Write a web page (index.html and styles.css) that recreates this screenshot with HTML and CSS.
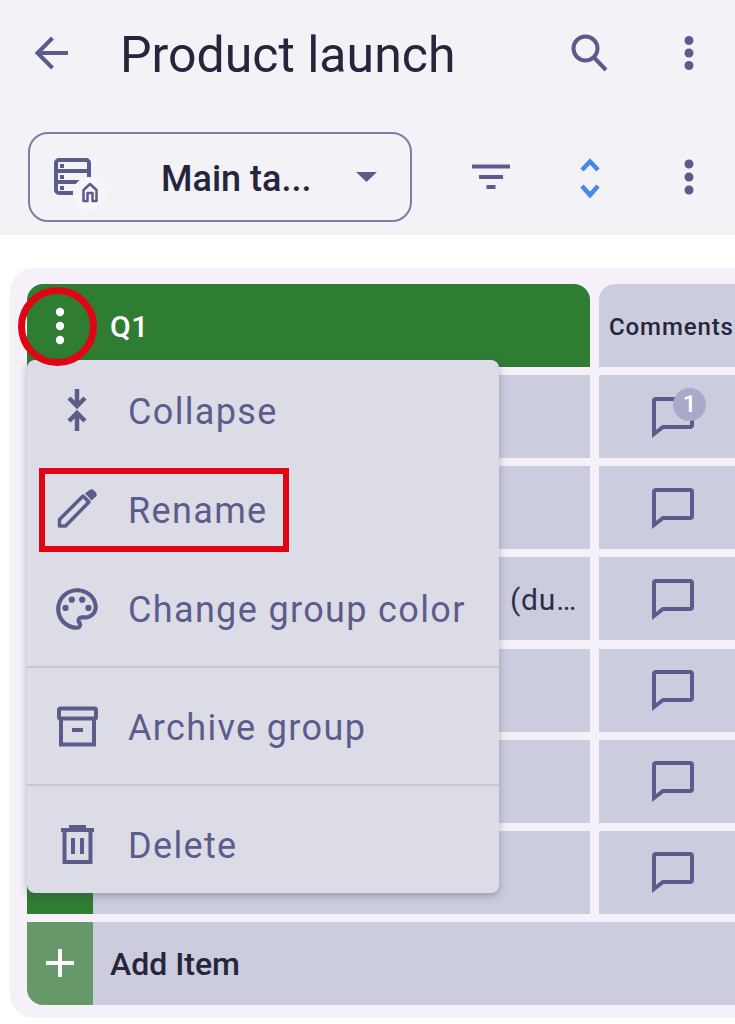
FILE: index.html
```html
<!DOCTYPE html>
<html lang="en">
<head>
<meta charset="utf-8">
<title>Product launch</title>
<link rel="stylesheet" href="styles.css">
</head>
<body>
<div class="app">
  <header class="topbar">
    <div class="title-row">
      <button class="icon-slot">
        <svg class="ico" viewBox="0 0 50 50"><path class="st" d="M41 25H11M25.500 10 10.500 25 25.500 40"/></svg>
      </button>
      <h1 class="title">Product launch</h1>
      <div class="actions">
        <button class="icon-slot">
          <svg class="ico" viewBox="0 0 50 50"><circle class="st" cx="21.500" cy="20.500" r="12"/><path class="st" d="M30 29.500 42 42"/></svg>
        </button>
        <button class="icon-slot">
          <svg class="ico" viewBox="0 0 50 50"><circle class="fl" cx="25" cy="12.500" r="4.500"/><circle class="fl" cx="25" cy="25" r="4.500"/><circle class="fl" cx="25" cy="37.500" r="4.500"/></svg>
        </button>
      </div>
    </div>
    <div class="tool-row">
      <div class="selector">
        <svg class="table-ico" viewBox="0 0 56 56">
          <rect class="st" x="4" y="11" width="33" height="33" rx="3"/>
          <path class="st" d="M4 22H37M4 33H37"/>
          <rect class="fl" x="8" y="15" width="4" height="4"/><rect class="fl" x="8" y="26" width="4" height="4"/><rect class="fl" x="8" y="37" width="4" height="4"/>
          <circle class="badge-bg" cx="37" cy="44" r="16"/>
          <path class="st-thin" d="M31.500 52V41L38 35 44.500 41V52H40.500V44H35.500V52Z"/>
        </svg>
        <span class="selector-label">Main ta...</span>
        <svg class="caret" viewBox="0 0 21 10"><path class="fl" d="M0 0H21L10.500 10Z"/></svg>
      </div>
      <div class="actions tools">
        <button class="icon-slot">
          <svg class="ico" viewBox="0 0 50 50"><path class="st" d="M6 14.500H44M13 25H37M20.500 35H29.500"/></svg>
        </button>
        <button class="icon-slot">
          <svg class="ico" viewBox="0 0 50 50"><path class="st-blue" d="M17 18 25 9.500 33 18M17 34 25 43 33 34"/></svg>
        </button>
        <button class="icon-slot">
          <svg class="ico" viewBox="0 0 50 50"><circle class="fl" cx="25" cy="12" r="4.500"/><circle class="fl" cx="25" cy="25" r="4.500"/><circle class="fl" cx="25" cy="38" r="4.500"/></svg>
        </button>
      </div>
    </div>
  </header>

  <main class="card">
    <div class="board">
      <div class="row">
        <div class="group-head"><svg class="head-dots" viewBox="0 0 12 40"><circle cx="6" cy="6" r="4.200"/><circle cx="6" cy="20" r="4.200"/><circle cx="6" cy="34" r="4.200"/></svg></div>
        <div class="group-head head-name">Q1</div>
        <div class="col-head">Comments</div>
      </div>
      <div class="row">
        <div class="stripe"></div><div class="name"></div>
        <div class="comment"><span class="bubble-wrap"><svg class="bubble" viewBox="0 0 42 42"><path class="st" d="M2 37V4Q2 2 4 2H38Q40 2 40 4V28Q40 30 38 30H11Z"/></svg><span class="count">1</span></span></div>
      </div>
      <div class="row">
        <div class="stripe"></div><div class="name"></div>
        <div class="comment"><span class="bubble-wrap"><svg class="bubble" viewBox="0 0 42 42"><path class="st" d="M2 37V4Q2 2 4 2H38Q40 2 40 4V28Q40 30 38 30H11Z"/></svg></span></div>
      </div>
      <div class="row">
        <div class="stripe"></div><div class="name name-text">(du…</div>
        <div class="comment"><span class="bubble-wrap"><svg class="bubble" viewBox="0 0 42 42"><path class="st" d="M2 37V4Q2 2 4 2H38Q40 2 40 4V28Q40 30 38 30H11Z"/></svg></span></div>
      </div>
      <div class="row">
        <div class="stripe"></div><div class="name"></div>
        <div class="comment"><span class="bubble-wrap"><svg class="bubble" viewBox="0 0 42 42"><path class="st" d="M2 37V4Q2 2 4 2H38Q40 2 40 4V28Q40 30 38 30H11Z"/></svg></span></div>
      </div>
      <div class="row">
        <div class="stripe"></div><div class="name"></div>
        <div class="comment"><span class="bubble-wrap"><svg class="bubble" viewBox="0 0 42 42"><path class="st" d="M2 37V4Q2 2 4 2H38Q40 2 40 4V28Q40 30 38 30H11Z"/></svg></span></div>
      </div>
      <div class="row">
        <div class="stripe"></div><div class="name"></div>
        <div class="comment"><span class="bubble-wrap"><svg class="bubble" viewBox="0 0 42 42"><path class="st" d="M2 37V4Q2 2 4 2H38Q40 2 40 4V28Q40 30 38 30H11Z"/></svg></span></div>
      </div>
      <div class="row add-row">
        <div class="add-btn"><svg class="plus" viewBox="0 0 30 30"><path d="M15 1V29M1 15H29"/></svg></div>
        <div class="add-label">Add Item</div>
      </div>

      <div class="menu">
        <div class="menu-item">
          <svg class="ico" viewBox="0 0 50 50"><path class="st-bold" d="M25 3V19M17 12 25 20 33 12M25 45V28M17 35 25 27 33 35"/></svg>
          <span>Collapse</span>
        </div>
        <div class="menu-item">
          <svg class="ico" viewBox="0 0 50 50"><path class="st-pen" d="M7.500 41V34.500L31 11 37 17 13.500 41Z"/><path class="fl" d="M33 8.500 37.500 5Q39.500 3.500 41.500 5L44 7.500Q45.500 9.500 44 11.500L39.500 15.500Z"/></svg>
          <span>Rename</span>
        </div>
        <div class="menu-item">
          <svg class="ico" viewBox="0 0 24 24"><path class="fl" d="M12 22C6.490 22 2 17.510 2 12S6.490 2 12 2s10 4.040 10 9c0 3.310-2.690 6-6 6h-1.770c-.28 0-.5.22-.5.5 0 .12.05.23.13.33.41.47.64 1.060.64 1.670A2.500 2.500 0 0112 22zm0-18c-4.410 0-8 3.590-8 8s3.590 8 8 8c.28 0 .5-.22.5-.5a.54.54 0 00-.14-.35c-.41-.46-.63-1.050-.63-1.650a2.500 2.500 0 012.500-2.500H16c2.210 0 4-1.790 4-4 0-3.860-3.590-7-8-7z"/><circle class="fl" cx="6.500" cy="11.500" r="1.500"/><circle class="fl" cx="9.500" cy="7.500" r="1.500"/><circle class="fl" cx="14.500" cy="7.500" r="1.500"/><circle class="fl" cx="17.500" cy="11.500" r="1.500"/></svg>
          <span>Change group color</span>
        </div>
        <hr class="menu-sep">
        <div class="menu-item">
          <svg class="ico" viewBox="0 0 50 50"><rect class="st" x="7" y="6.500" width="37" height="10" rx="1.500"/><path class="st" d="M9 17V42.500H42V17M20 28H31"/></svg>
          <span>Archive group</span>
        </div>
        <hr class="menu-sep">
        <div class="menu-item">
          <svg class="ico" viewBox="0 0 50 50"><path class="st" d="M9 10H42M19 9V7H32V9M12.500 11V42H38.500V11M21 18V34M30 18V34"/></svg>
          <span>Delete</span>
        </div>
      </div>

      <div class="mark-circle"></div>
      <div class="mark-rect"></div>
    </div>
  </main>
</div>
</body>
</html>
```

FILE: styles.css
```css
* { box-sizing: border-box; }
html, body { margin: 0; padding: 0; background: #fff; }
body { font-family: Roboto, "Liberation Sans", sans-serif; }
.app { width: 735px; height: 1024px; overflow: hidden; }

.st { fill: none; stroke: #5c5c8c; stroke-width: 4; }
.st-bold { fill: none; stroke: #5c5c8c; stroke-width: 4.500; }
.st-pen { fill: none; stroke: #5c5c8c; stroke-width: 3.500; stroke-linejoin: round; }
.st-thin { fill: none; stroke: #5c5c8c; stroke-width: 2.500; stroke-linejoin: round; }
.st-blue { fill: none; stroke: #4a86e8; stroke-width: 4.500; }
.fl { fill: #5c5c8c; }
.badge-bg { fill: #f7f7fb; }

.topbar { height: 235px; background: #f2f2f7; }
.title-row { height: 106px; display: flex; align-items: center; padding: 0 21px 0 27px; }
.icon-slot { width: 50px; height: 50px; padding: 0; border: 0; background: none; display: block; flex: none; }
.ico { width: 50px; height: 50px; display: block; flex: none; }
.title { margin: 4px 0 0 43px; font-size: 50px; font-weight: 400; color: #25253c; line-height: 56px; }
.actions { margin-left: auto; display: flex; gap: 50px; }
.actions.tools { gap: 49px; }

.tool-row { margin-top: 26px; padding: 0 21px 0 28px; display: flex; align-items: center; }
.selector { width: 384px; height: 90px; flex: none; border: 2px solid #7d7da8; border-radius: 20px; display: flex; align-items: center; padding: 0 33px 0 22px; }
.table-ico { width: 56px; height: 56px; flex: none; overflow: visible; }
.selector-label { margin: 3px 0 0 53px; font-size: 36px; font-weight: 500; color: #25253c; white-space: nowrap; }
.caret { width: 21px; height: 10px; margin-left: auto; }

.card { margin: 33px 0 0 10px; height: 750px; background: #f6f1f8; border-radius: 24px 0 0 24px; padding: 16px 0 0 17px; }
.board { position: relative; display: flex; flex-direction: column; gap: 8.150px; }
.row { display: flex; height: 83px; flex: none; }
.group-head { width: 66px; flex: none; background: #2e7d32; border-radius: 16px 0 0 0; display: flex; align-items: center; justify-content: center; }
.group-head.head-name { width: 497px; border-radius: 0 16px 0 0; justify-content: flex-start; padding: 2px 0 0 17px; color: #fff; font-size: 30px; font-weight: 500; letter-spacing: .5px; }
.head-dots { width: 12px; height: 40px; fill: #fff; }
.col-head { width: 150px; flex: none; margin-left: 9px; background: #ccccdf; border-radius: 16px 0 0 0; display: flex; align-items: center; padding: 3px 0 0 10px; font-size: 24px; font-weight: 500; color: #25253c; letter-spacing: .9px; white-space: nowrap; overflow: hidden; }
.stripe { width: 66px; flex: none; background: #2e7d32; }
.name { width: 497px; flex: none; background: #ccccdf; }
.name-text { display: flex; align-items: center; justify-content: flex-end; padding: 2px 13px 0 0; font-size: 30px; color: #2e2e48; letter-spacing: .8px; }
.comment { width: 150px; flex: none; margin-left: 9px; background: #ccccdf; padding: 21.500px 0 0 53px; }
.bubble-wrap { position: relative; display: block; width: 42px; height: 42px; }
.bubble { width: 42px; height: 42px; display: block; }
.count { position: absolute; left: 21px; top: -9px; width: 33px; height: 33px; border-radius: 50%; background: #a9a9c9; color: #fff; font-size: 24px; font-weight: 500; display: flex; align-items: center; justify-content: center; }

.add-btn { width: 66px; flex: none; background: #66986a; border-radius: 0 0 0 16px; display: flex; align-items: center; justify-content: center; }
.plus { width: 30px; height: 30px; fill: none; stroke: #fff; stroke-width: 4; }
.add-label { width: 660px; flex: none; background: #ccccdf; display: flex; align-items: center; padding: 2px 0 0 17px; font-size: 32px; font-weight: 500; color: #25253c; }

.menu { position: absolute; left: 0; top: 76px; width: 472px; height: 533px; overflow: hidden; background: #dcdce6; border-radius: 8px; box-shadow: 0 3px 8px rgba(60, 60, 90, .35); padding-top: 1px; }
.menu-item { height: 99px; display: flex; align-items: center; gap: 26px; padding-left: 25px; font-size: 36px; color: #5c5c8c; letter-spacing: 1.35px; white-space: nowrap; }
.menu-item span { padding-top: 2px; }
.menu-sep { height: 2px; margin: 8px 0 9px; border: 0; background: #c6c6d4; }

.mark-circle { position: absolute; left: -9px; top: 3px; width: 79px; height: 79px; border: 7px solid #e00512; border-radius: 50%; }
.mark-rect { position: absolute; left: 12px; top: 184px; width: 250px; height: 84px; border: 6px solid #e00512; }
```
